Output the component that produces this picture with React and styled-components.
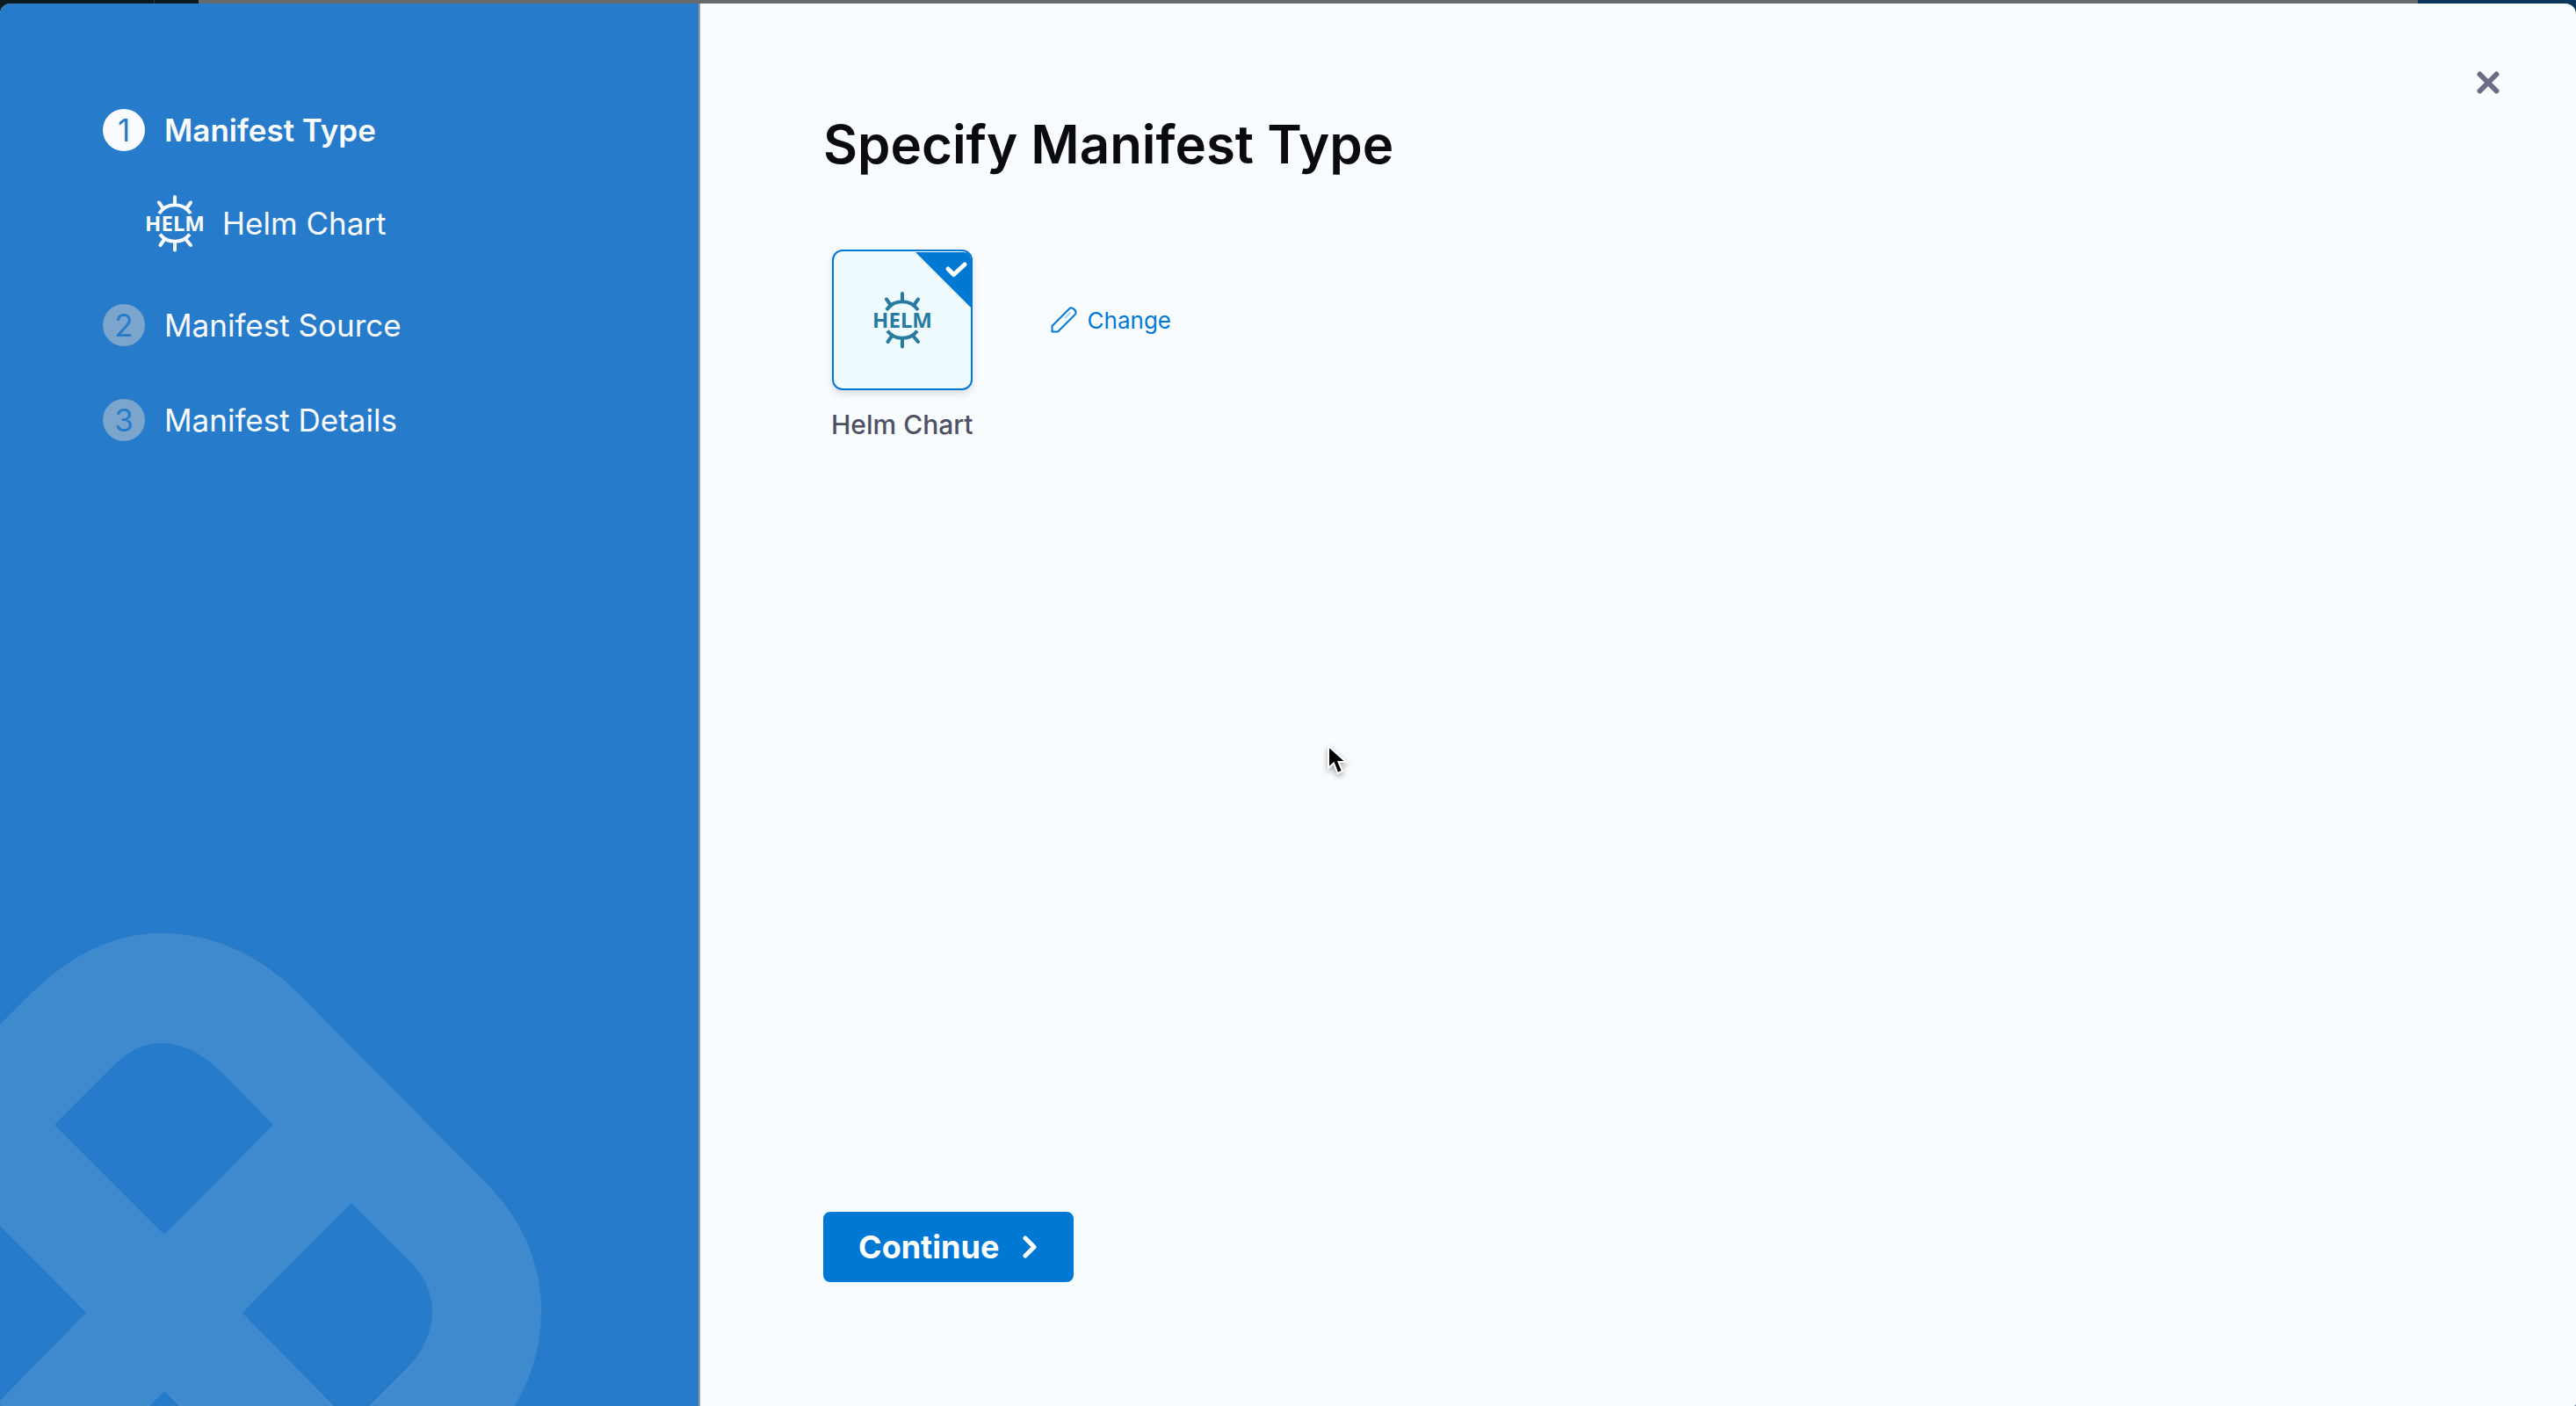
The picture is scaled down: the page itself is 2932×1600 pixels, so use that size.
import React from "react";
import styled, { createGlobalStyle } from "styled-components";

const GlobalStyle = createGlobalStyle`
  *, *::before, *::after { box-sizing: border-box; }
  body {
    margin: 0;
    background: #0a365c;
    font-family: Inter, "Liberation Sans", sans-serif;
  }
  button { font: inherit; border: 0; cursor: pointer; }
  svg { display: block; flex: none; }
`;

const Screen = styled.div`
  display: flex;
  flex-direction: column;
  height: 100vh;
  background: linear-gradient(to right, #0b1a21 50%, #0a365c 50%);
`;

const Backdrop = styled.div`
  display: flex;
  height: 4px;
  flex: none;
  background: #0a365c;
`;

const BackdropNav = styled.div`
  width: ${({ $width }) => $width}px;
  border-right: ${({ $divided }) => ($divided ? "1px solid #2a3940" : "0")};
  background: #0b1a21;
`;

const BackdropPage = styled.div`
  flex: 1;
  margin-right: 180px;
  background: #666a6d;
`;

const Dialog = styled.div`
  display: flex;
  flex: 1;
  min-height: 0;
  border-radius: 12px 12px 2px 2px;
  overflow: hidden;
  background: #f9fcff;
`;

const Sidebar = styled.aside`
  position: relative;
  width: 797px;
  flex: none;
  padding: 120px 117px 0;
  border-right: 2px solid #9a9a9e;
  background: #267bca;
`;

const Watermark = styled.svg`
  position: absolute;
  left: 0;
  bottom: 0;
`;

const Steps = styled.ol`
  position: relative;
  display: flex;
  flex-direction: column;
  gap: 60px;
  margin: 0;
  padding: 0;
  list-style: none;
`;

const StepLine = styled.div`
  display: flex;
  align-items: center;
  gap: 22px;
  height: 48px;
  color: #f9fbfe;
  font-size: 35px;
  line-height: 44px;
  font-weight: ${({ $active }) => ($active ? 600 : 400)};
`;

const StepNumber = styled.span`
  display: grid;
  place-items: center;
  width: 48px;
  height: 48px;
  border-radius: 50%;
  background: ${({ $active }) => ($active ? "#f9fbfe" : "#7ba5cd")};
  color: #267bca;
  font-weight: 400;
`;

const StepChoice = styled.div`
  display: flex;
  align-items: center;
  gap: 22px;
  height: 64px;
  margin-top: 50px;
  padding-left: 50px;
  color: #f9fbfe;
  font-size: 35px;
`;

const Wordmark = styled.text`
  font-family: "Noto Sans", "Open Sans", sans-serif;
  font-size: 24px;
  font-weight: 700;
`;

const Content = styled.main`
  display: flex;
  flex: 1;
  flex-direction: column;
  align-items: flex-start;
  padding: 66px 76px 141px 140px;
`;

const CloseButton = styled.button`
  align-self: flex-end;
  display: grid;
  place-items: center;
  width: 48px;
  height: 48px;
  padding: 0;
  background: none;
  color: #6b6d85;
`;

const Title = styled.h1`
  margin: 6px 0 80px;
  color: #0b0b0d;
  font-size: 60px;
  line-height: 80px;
  font-weight: 600;
`;

const Choice = styled.div`
  display: flex;
  align-items: flex-start;
  gap: 88px;
  padding-left: 9px;
`;

const Option = styled.div`
  display: flex;
  flex-direction: column;
  align-items: center;
  gap: 19px;
  color: #4f5162;
  font-size: 30px;
  line-height: 40px;
  font-weight: 500;
`;

const Tile = styled.button`
  position: relative;
  display: grid;
  place-items: center;
  width: 160px;
  height: 160px;
  padding: 0;
  border: 2px solid #0278d5;
  border-radius: 12px;
  background: #effbff;
  box-shadow: 0 4px 8px rgba(96, 97, 112, 0.2);
  color: #277ba0;
`;

const Corner = styled.svg`
  position: absolute;
  top: 1px;
  right: 0;
`;

const ChangeButton = styled.button`
  display: flex;
  align-items: center;
  gap: 12px;
  height: 160px;
  padding: 0;
  background: none;
  color: #0278d5;
  font-size: 26px;
`;

const ContinueButton = styled.button`
  display: flex;
  align-items: center;
  justify-content: space-between;
  width: 285px;
  height: 80px;
  margin-top: auto;
  padding: 0 42px 0 40px;
  border-radius: 8px;
  background: #0278d5;
  color: #fff;
  font-size: 36px;
  font-weight: 700;
`;

const Pointer = styled.svg`
  position: fixed;
  left: 1507px;
  top: 843px;
  overflow: visible;
  filter: drop-shadow(0 3px 3px rgba(0, 0, 0, 0.35));
  pointer-events: none;
`;

function HelmLogo() {
  return (
    <svg width="64" height="64" viewBox="0 0 64 64" overflow="visible" aria-hidden="true">
      <g fill="none" stroke="currentColor" strokeWidth="4">
        <path d="M14 21A21.500 21.500 0 0 1 50 21M15 44.500A21.500 21.500 0 0 0 49 44.500" />
        <path
          strokeLinecap="round"
          d="M32 2V10M14 8.500L19 15.500M50 8.500L45 15.500M32 55V62.500M15.500 57L20 50.500M50 57L44.500 50.500"
        />
      </g>
      <Wordmark x="32" y="41" textAnchor="middle" fill="currentColor">
        HELM
      </Wordmark>
    </svg>
  );
}

const STEPS = [
  { label: "Manifest Type", choice: "Helm Chart" },
  { label: "Manifest Source" },
  { label: "Manifest Details" },
];

export default function App() {
  return (
    <Screen>
      <GlobalStyle />
      <Backdrop>
        <BackdropNav $width={176} $divided />
        <BackdropNav $width={50} />
        <BackdropPage />
      </Backdrop>
      <Dialog role="dialog" aria-labelledby="dialog-title">
        <Sidebar>
          <Watermark width="620" height="540" viewBox="0 1060 620 540" aria-hidden="true">
            <path
              fill="#3f8ace"
              fillRule="evenodd"
              d="M0 1166L37 1129C85 1083 133 1062 183 1062C238 1062 292 1083 338 1129L552 1345C594 1387 616 1437 616 1490C616 1530 606 1566 586 1600H0Z
                 M62 1280L131 1211C148 1195 165 1187 182 1187C204 1187 227 1196 251 1219L311 1280L187 1405Z
                 M400 1369L467 1436C484 1453 492 1472 492 1492C492 1514 482 1538 463 1557L420 1600H380L276 1494Z
                 M0 1395L98 1494L0 1594Z
                 M187 1583L204 1600H170Z"
            />
          </Watermark>
          <Steps>
            {STEPS.map(({ label, choice }, index) => (
              <li key={label}>
                <StepLine $active={index === 0}>
                  <StepNumber $active={index === 0}>{index + 1}</StepNumber>
                  {label}
                </StepLine>
                {choice && (
                  <StepChoice>
                    <HelmLogo />
                    {choice}
                  </StepChoice>
                )}
              </li>
            ))}
          </Steps>
        </Sidebar>
        <Content>
          <CloseButton aria-label="Close">
            <svg width="26" height="26" viewBox="0 0 26 26" fill="none" stroke="currentColor" strokeWidth="6" strokeLinecap="round">
              <path d="M3.500 3.500L22.500 22.500M22.500 3.500L3.500 22.500" />
            </svg>
          </CloseButton>
          <Title id="dialog-title">Specify Manifest Type</Title>
          <Choice>
            <Option>
              <Tile aria-label="Helm Chart" aria-pressed="true">
                <HelmLogo />
                <Corner width="63" height="63" viewBox="0 0 63 63">
                  <path fill="#0278d5" d="M0 0H54Q63 0 63 9V63Z" />
                  <path d="M37 19L43.500 25.500L56 14" fill="none" stroke="#fff" strokeWidth="5" strokeLinecap="round" strokeLinejoin="round" />
                </Corner>
              </Tile>
              Helm Chart
            </Option>
            <ChangeButton>
              <svg width="30" height="30" viewBox="0 0 30 30" fill="none" stroke="currentColor" strokeWidth="2" strokeLinejoin="round">
                <path d="M1.500 28.500V22L21.500 2Q22.500 1 24 1.500Q28 3 28.500 6Q28.700 7.500 28 8.500L8 28.500Z" />
                <path d="M16 13L22.500 6.500" strokeOpacity="0.3" />
              </svg>
              Change
            </ChangeButton>
          </Choice>
          <ContinueButton>
            Continue
            <svg width="16" height="26" viewBox="0 0 16 26" fill="none" stroke="currentColor" strokeWidth="5" strokeLinecap="round" strokeLinejoin="round">
              <path d="M3 3L13 13L3 23" />
            </svg>
          </ContinueButton>
        </Content>
      </Dialog>
      <Pointer width="24" height="34" viewBox="0 0 24 34" aria-hidden="true">
        <path
          d="M5 6V31L11 25.500L15.500 37L21 34.500L16.500 24H25Z"
          fill="#000"
          stroke="#fff"
          strokeWidth="2"
        />
      </Pointer>
    </Screen>
  );
}
